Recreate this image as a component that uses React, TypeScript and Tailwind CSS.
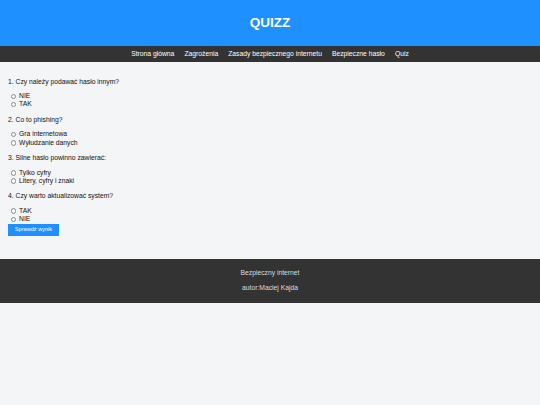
import React from "react";

const QUESTIONS = [
  { q: "1. Czy należy podawać hasło innym?", a: ["NIE", "TAK"] },
  { q: "2. Co to phishing?", a: ["Gra internetowa", "Wyłudzanie danych"] },
  { q: "3. Silne hasło powinno zawierać:", a: ["Tylko cyfry", "Litery, cyfry i znaki"] },
  { q: "4. Czy warto aktualizować system?", a: ["TAK", "NIE"] },
];

const LINKS = ["Strona główna", "Zagrożenia", "Zasady bezpiecznego internetu", "Bezpieczne hasło", "Quiz"];

export default function App() {
  return (
    <div className="min-h-[405px] bg-[#f4f5f6] font-['Liberation_Sans',Arial,sans-serif] text-[6.75px] text-[#111]">
      <header className="h-[46px] bg-[#1e90ff] flex items-center justify-center">
        <h1 className="text-[13.5px] font-bold text-white leading-none">QUIZZ</h1>
      </header>

      <nav className="h-[16px] bg-[#333] flex items-center justify-center gap-[10px] text-white">
        {LINKS.map((l) => (
          <a key={l} href="#" className="leading-none">
            {l}
          </a>
        ))}
      </nav>

      <main className="px-[8px] pt-[8.5px] pb-[22.5px]">
        <form>
          {QUESTIONS.map((item, i) => (
            <div key={i}>
              <p className="my-[7px] leading-[7.75px]">{item.q}</p>
              {item.a.map((ans) => (
                <label key={ans} className="flex items-center h-[8.25px] leading-none">
                  <input
                    type="radio"
                    name={`q${i}`}
                    className="appearance-none w-[5.3px] h-[5.3px] rounded-full border-[0.5px] border-[#8a8a8a] bg-white ml-[2.5px] mr-[3.3px]"
                  />
                  {ans}
                </label>
              ))}
            </div>
          ))}
          <button
            type="button"
            className="mt-[0.5px] w-[51px] h-[12px] bg-[#1e90ff] text-white text-[5.6px] leading-none"
          >
            Sprawdź wynik
          </button>
        </form>
      </main>

      <footer className="h-[44px] bg-[#333] text-[#ddd] flex flex-col items-center justify-center gap-[7.25px]">
        <p className="leading-[7.75px]">Bezpieczny internet</p>
        <p className="leading-[7.75px]">autor:Maciej Kajda</p>
      </footer>
    </div>
  );
}
